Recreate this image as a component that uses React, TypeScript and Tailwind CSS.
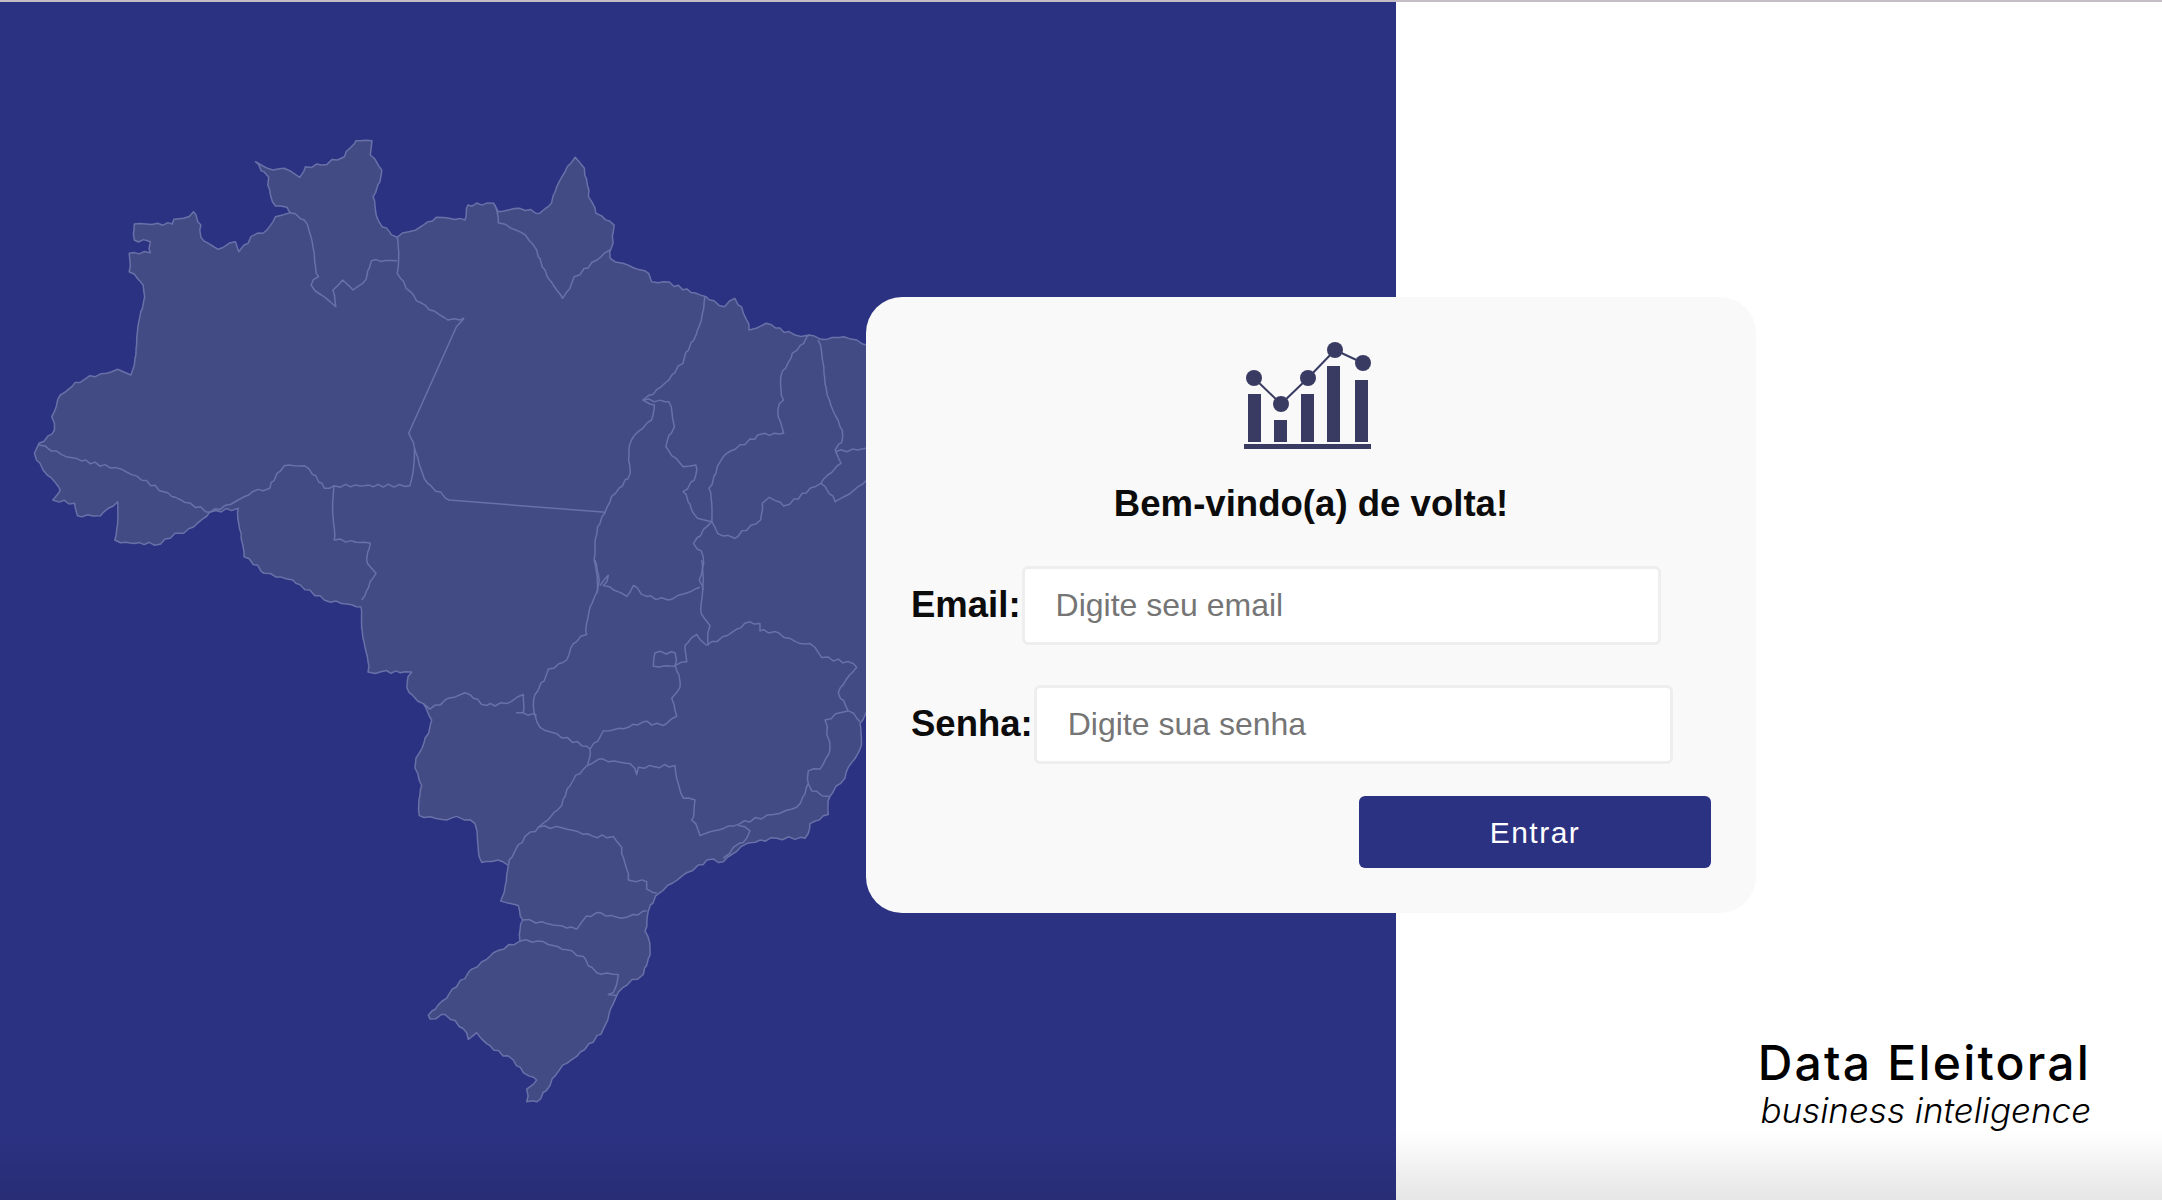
import React from 'react';

type Pt = [number, number];

// the map is traced from two crops, so points come in two coordinate systems
const north = (pts: number[]): Pt[] => {
  const out: Pt[] = [];
  for (let i = 0; i < pts.length; i += 2) out.push([pts[i] / 1.742, 100 + pts[i + 1] / 3]);
  return out;
};
const south = (pts: number[]): Pt[] => {
  const out: Pt[] = [];
  for (let i = 0; i < pts.length; i += 2) out.push([380 + pts[i] / 3, 560 + pts[i + 1] / 2.75]);
  return out;
};

// rivers and coast are jagged, long straight borders stay straight
const rough = (pts: Pt[]): Pt[] => {
  const out: Pt[] = [];
  let n = 0;
  for (let i = 0; i < pts.length - 1; i++) {
    const [x1, y1] = pts[i];
    const [x2, y2] = pts[i + 1];
    const len = Math.hypot(x2 - x1, y2 - y1);
    out.push(pts[i]);
    if (len > 90) continue;
    const steps = Math.floor(len / 5);
    for (let s = 1; s < steps; s++) {
      n++;
      const dx = Math.sin(n * 12.9898) * 1.5;
      const dy = Math.cos(n * 78.233) * 1.5;
      out.push([x1 + ((x2 - x1) * s) / steps + dx, y1 + ((y2 - y1) * s) / steps + dy]);
    }
  }
  out.push(pts[pts.length - 1]);
  return out;
};

const toPoints = (pts: Pt[]) =>
  rough(pts)
    .map((p) => `${p[0].toFixed(1)},${p[1].toFixed(1)}`)
    .join(' ');

const outline: Pt[] = [
  ...north([
    60, 1060, 68, 1030, 95, 990, 90, 950, 105, 885, 125, 860, 150, 835, 195, 815, 205, 808, 228, 825, 252, 590, 245, 545, 225, 515,
    225, 460, 262, 458, 262, 425, 234, 420, 234, 372, 300, 372, 303, 358, 320, 355, 337, 335, 350, 375, 350, 412, 380, 448,
    410, 425, 416, 455, 437, 410, 465, 390, 480, 350, 505, 338, 500, 322, 480, 318, 470, 270, 468, 232, 445, 185, 455, 195,
    475, 210, 495, 205, 522, 232, 532, 200, 560, 195, 600, 170, 618, 130, 620, 122, 648, 122, 645, 165, 665, 210, 650, 290,
    660, 365, 692, 412, 712, 395, 735, 378, 760, 352, 810, 360, 815, 315, 860, 310, 868, 335, 905, 325, 940, 340, 955, 320,
    970, 260, 1002, 172, 1018, 205, 1025, 290, 1038, 340, 1070, 375, 1068, 430, 1063, 475, 1085, 490, 1130, 520, 1135, 545,
    1155, 545, 1230, 590, 1262, 620, 1280, 595, 1295, 640, 1305, 690, 1335, 670, 1385, 705, 1410, 705, 1430, 718, 1470, 710,
    1510, 735,
  ]),
  [900, 345],
  [900, 713],
  ...south([
    1458, 420, 1440, 450, 1440, 520, 1405, 570, 1395, 600, 1350, 650, 1345, 700, 1290, 725, 1275, 765, 1190, 765, 1100, 780,
    1055, 810, 1030, 830, 980, 825, 920, 860, 840, 915, 805, 965, 795, 1020, 810, 1070, 790, 1140, 730, 1175, 700, 1220,
    670, 1290, 590, 1365, 540, 1400, 510, 1445, 470, 1490, 440, 1490, 440, 1455, 470, 1430, 430, 1410, 400, 1375, 320, 1330,
    290, 1300, 265, 1318, 260, 1300, 195, 1250, 150, 1262, 145, 1252, 200, 1205, 275, 1125, 340, 1080, 420, 1048, 428, 990,
    415, 950, 362, 938, 385, 840, 355, 825, 305, 832, 285, 725, 230, 705, 200, 715, 118, 703, 125, 620, 105, 572, 108, 545,
    135, 490, 155, 440, 130, 395, 88, 365, 82, 335, 95, 308, 0, 308,
  ]),
  [368, 672],
  [361, 607],
  ...north([
    565, 1500, 510, 1440, 460, 1420, 425, 1370, 420, 1300, 415, 1225, 365, 1237, 320, 1300, 305, 1300, 280, 1332, 210, 1328,
    200, 1320, 205, 1205, 175, 1247, 135, 1247, 130, 1210, 92, 1200, 105, 1170, 75, 1110, 60, 1060,
  ]),
];

const borders: Pt[][] = [
  north([68, 1035, 115, 1070, 212, 1108, 285, 1175, 365, 1237]),
  north([505, 338, 530, 360, 545, 440, 555, 530, 542, 555, 560, 585, 575, 605, 585, 620, 580, 570, 597, 540, 615, 570, 632, 550, 647, 482, 692, 482]),
  north([692, 412, 692, 520, 715, 575, 735, 610, 780, 660, 808, 655, 795, 680, 712, 1000, 722, 1045, 745, 1150, 782, 1200, 1055, 1237]),
  north([722, 1045, 714, 1157, 582, 1157]),
  north([365, 1237, 415, 1200, 440, 1175, 470, 1165, 495, 1097, 530, 1097, 565, 1165, 582, 1157, 582, 1320, 645, 1330, 640, 1390, 655, 1420, 630, 1500]),
  north([862, 315, 868, 368, 915, 405, 935, 450, 960, 545, 980, 595, 1000, 530, 1040, 480, 1063, 450]),
  north([1228, 590, 1215, 690, 1190, 790, 1165, 840, 1120, 900, 1140, 915, 1135, 960, 1100, 1020, 1095, 1080, 1098, 1120, 1065, 1190, 1040, 1300, 1035, 1380, 1040, 1480]),
  north([1120, 900, 1165, 905, 1175, 980, 1160, 1040, 1190, 1100, 1212, 1095, 1212, 1125, 1190, 1175, 1215, 1255, 1240, 1265, 1208, 1330, 1225, 1370, 1218, 1440, 1225, 1470]),
  north([1410, 705, 1380, 760, 1360, 830, 1365, 900, 1355, 930, 1365, 1000, 1320, 1005, 1260, 1070, 1235, 1165, 1240, 1265, 1250, 1300, 1280, 1315, 1325, 1260, 1328, 1210, 1340, 1192, 1365, 1218, 1430, 1150, 1465, 1090, 1455, 1050, 1468, 1010, 1445, 900, 1435, 800, 1425, 720]),
  north([1455, 1055, 1510, 1045]),
  north([1430, 1150, 1455, 1205, 1470, 1190, 1510, 1140]),
  south([660, 70, 685, 42, 670, 70, 740, 100, 760, 70, 800, 100, 865, 110, 960, 75]),
  south([645, 0, 655, 70, 630, 130, 620, 205, 580, 230, 560, 275, 505, 300, 465, 370, 460, 400, 480, 460, 520, 475, 630, 520, 622, 565, 580, 605, 545, 675, 475, 735, 435, 760, 405, 800, 385, 840]),
  south([130, 395, 150, 410, 205, 380, 255, 365, 320, 400, 380, 395, 430, 370, 430, 420, 410, 420, 470, 428]),
  south([630, 520, 670, 470, 745, 460, 790, 445, 850, 455, 890, 430, 875, 380, 900, 350, 885, 290, 920, 280, 915, 235, 950, 205, 980, 235]),
  south([965, 0, 965, 150, 990, 180, 985, 235]),
  south([825, 255, 885, 255, 885, 292, 820, 292, 825, 255]),
  south([980, 235, 1110, 170, 1140, 175, 1140, 195, 1185, 197, 1260, 230, 1290, 230, 1325, 268, 1420, 285, 1430, 295, 1375, 365, 1405, 415, 1440, 445]),
  south([1405, 415, 1380, 420, 1335, 440, 1340, 480, 1350, 520, 1320, 575, 1285, 580, 1285, 615, 1295, 635, 1350, 650]),
  south([1285, 615, 1250, 680, 1180, 700, 1080, 725, 1000, 745, 960, 758, 935, 715, 945, 660, 910, 655, 885, 565, 820, 568, 775, 570, 770, 590, 750, 560, 655, 548, 622, 565]),
  south([1075, 730, 1110, 745, 1100, 765, 1060, 790, 1030, 820]),
  south([475, 735, 540, 735, 640, 760, 700, 760, 725, 790, 745, 880, 800, 885, 800, 905, 830, 915]),
  south([428, 990, 500, 1000, 590, 1015, 610, 990, 650, 970, 725, 985, 800, 965]),
  south([420, 1048, 470, 1048, 560, 1072, 610, 1090, 650, 1135, 715, 1140, 700, 1190, 685, 1195, 710, 1198]),
];

const BrazilMap = () => (
  <svg viewBox="0 2 1396 1198" className="block h-full w-full">
    <polygon points={toPoints(outline)} fill="#434b85" stroke="#6971a8" strokeWidth="1.5" strokeLinejoin="round" />
    {borders.map((line, i) => (
      <polyline key={i} points={toPoints(line)} fill="none" stroke="#6971a8" strokeWidth="1.5" strokeLinejoin="round" />
    ))}
  </svg>
);

const ChartLogo = () => (
  <svg viewBox="0 0 128 108" className="h-[108px] w-[128px]" fill="#3a3b63">
    <rect x="4" y="52" width="13" height="48" />
    <rect x="30" y="78" width="13" height="22" />
    <rect x="57" y="52" width="13" height="48" />
    <rect x="83" y="24" width="13" height="76" />
    <rect x="111" y="38" width="13" height="62" />
    <rect x="0" y="102" width="127" height="5" />
    <polyline points="10,36 37,62 64,36 91,8 119,21" fill="none" stroke="#3a3b63" strokeWidth="2" />
    <circle cx="10" cy="36" r="8" />
    <circle cx="37" cy="62" r="8" />
    <circle cx="64" cy="36" r="8" />
    <circle cx="91" cy="8" r="8" />
    <circle cx="119" cy="21" r="8" />
  </svg>
);

const LoginField = ({ label, type, placeholder }: { label: string; type: string; placeholder: string }) => (
  <label className="flex items-center gap-[1px]">
    <span className="text-[36.5px] leading-none font-bold text-[#0c0c0c]">{label}</span>
    <input
      type={type}
      placeholder={placeholder}
      className="h-[79px] w-[639px] rounded-md border-[3px] border-[#eeeeee] bg-white pl-[31px] text-[32px] outline-none placeholder:text-[#757575]"
    />
  </label>
);

export default function App() {
  return (
    <div className="relative flex h-screen flex-col overflow-hidden bg-white font-['Liberation_Sans',Arial,sans-serif]">
      <div className="h-[2px] bg-[#c5bcc5]" />
      <div className="flex min-h-0 flex-1">
        <div className="w-[1396px] bg-[#2c3282]">
          <BrazilMap />
        </div>
        <div className="flex flex-1 flex-col items-end justify-end pr-[71px] pb-[70px]">
          <div className="text-[48px] leading-[54px] font-medium tracking-[2.2px] text-black font-['Inter',sans-serif]">Data Eleitoral</div>
          <div className="text-[35px] leading-[40px] font-light italic text-black font-['Inter',sans-serif]">business inteligence</div>
        </div>
      </div>

      <div className="pointer-events-none absolute inset-x-0 bottom-0 h-[70px] bg-gradient-to-b from-transparent to-black/10" />

      <div className="absolute top-[297px] left-[866px] flex h-[616px] w-[890px] flex-col rounded-[36px] bg-[#f9f9f9] px-[45px] pt-[45px]">
        <div className="flex justify-center pr-[6px]">
          <ChartLogo />
        </div>
        <h1 className="mt-[33px] text-center text-[36.6px] leading-[42px] font-bold text-[#0c0c0c]">Bem-vindo(a) de volta!</h1>
        <div className="mt-[41px] flex flex-col gap-[40px]">
          <LoginField label="Email:" type="email" placeholder="Digite seu email" />
          <LoginField label="Senha:" type="password" placeholder="Digite sua senha" />
        </div>
        <div className="mt-[32px] flex justify-end">
          <button className="h-[72px] w-[352px] rounded-md bg-[#2c3282] text-[30px] tracking-[1.5px] text-white">Entrar</button>
        </div>
      </div>
    </div>
  );
}
